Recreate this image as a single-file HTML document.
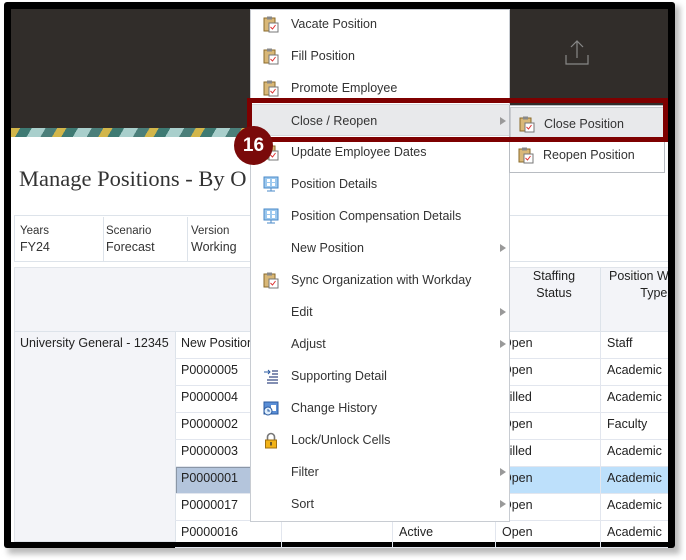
<!DOCTYPE html><html><head><style>
*{margin:0;padding:0;box-sizing:border-box}
body{width:686px;height:560px;background:#fff;position:relative;overflow:hidden;font-family:"Liberation Sans",sans-serif}
.a{position:absolute}
.t{font-size:12.5px;color:#333}
.mi{position:absolute;left:0;width:259px;height:32px;font-size:12.5px;color:#333;line-height:32px;padding-left:40px}
.ic{position:absolute;left:12px;top:8px;width:16px;height:17px}
.arr{position:absolute;right:4px;top:12px;width:0;height:0;border-left:6px solid #999;border-top:4px solid transparent;border-bottom:4px solid transparent}
.cell{position:absolute;font-size:12.5px;color:#222;height:27px;line-height:22px;padding-left:6px;border-bottom:1px solid #e2e6ee}
</style></head><body>
<div class="a" style="left:8px;top:6px;width:672px;height:548px;background:#bbb;filter:blur(3px)"></div>
<div class="a" style="left:4px;top:2px;width:671px;height:546px;background:#000;border-radius:3px"></div>
<div class="a" style="left:11px;top:9px;width:657px;height:533px;background:#fff;overflow:hidden">
 <div class="a" style="left:0;top:0;width:657px;height:119px;background:#312d2a"></div>
 <div class="a" style="left:0;top:119px;width:657px;height:9px;background:repeating-linear-gradient(120deg,#d2b64a 0 8px,#3e7a73 8px 18px,#a9cfcc 18px 30px,#4b7f7a 30px 40px)"></div>
 <div class="a" style="left:554px;top:30px;width:24px;height:28px">
  <svg width="24" height="28"><path d="M12 2V19M6 8L12 2L18 8M1 16V25H23V16" stroke="#888" stroke-width="1.2" fill="none"/></svg></div>
 <div class="a" style="left:8px;top:157px;font-family:'Liberation Serif',serif;font-size:22.5px;color:#333">Manage Positions - By O</div>
 <div class="a" style="left:3px;top:206px;width:660px;height:47px;border:1px solid #dde3ea"></div>
 <div class="a t" style="left:9px;top:216px;font-size:11.5px">Years<br><span style="font-size:12.5px;line-height:20px">FY24</span></div>
 <div class="a" style="left:92px;top:208px;width:1px;height:44px;background:#dde3ea"></div>
 <div class="a t" style="left:95px;top:216px;font-size:11.5px">Scenario<br><span style="font-size:12.5px;line-height:20px">Forecast</span></div>
 <div class="a" style="left:176px;top:208px;width:1px;height:44px;background:#dde3ea"></div>
 <div class="a t" style="left:180px;top:216px;font-size:11.5px">Version<br><span style="font-size:12.5px;line-height:20px">Working</span></div>
 <div class="a" style="left:3px;top:258px;width:660px;height:275px;background:#f3f4f8;border:1px solid #e0e4ea"></div>
 <div class="a" style="left:3px;top:322px;width:660px;height:1px;background:#dde3ea"></div>
 <div class="a" style="left:589px;top:258px;width:1px;height:64px;background:#dde3ea"></div>
 <div class="a" style="left:498px;top:259px;width:90px;text-align:center;font-size:12.5px;color:#222;line-height:17px">Staffing<br>Status</div>
 <div class="a" style="left:598px;top:259px;width:70px;font-size:12.5px;color:#222;line-height:17px;white-space:nowrap">Position W<br>&nbsp;&nbsp;&nbsp;&nbsp;&nbsp;&nbsp;&nbsp;&nbsp;&nbsp;Type</div>
 <div class="a" style="left:9px;top:327px;font-size:12.5px;color:#222">University General - 12345</div>
 <div class="a" style="left:164px;top:323px;width:1px;height:210px;background:#dde3ea"></div>
 <div class="a" style="left:165px;top:323px;width:492px;height:210px;background:#fff"></div>
 <div class="a" style="left:165px;top:458px;width:106px;height:27px;background:#b4c5dc;border:1px solid #8a96a6"></div>
 <div class="a" style="left:485px;top:457px;width:172px;height:28px;background:#bde0fb;border-top:1.5px solid #111;border-bottom:1.5px solid #111"></div>
</div>
<script>
var r=[["New Position","","Open","Staff"],["P0000005","","Open","Academic"],["P0000004","","Filled","Academic"],["P0000002","","Open","Faculty"],["P0000003","","Filled","Academic"],["P0000001","","Open","Academic"],["P0000017","","Open","Academic"],["P0000016","Active","Open","Academic"]];
var h="";r.forEach(function(x,i){var y=332+i*27;
h+='<div class="cell" style="left:175px;top:'+y+'px;width:106px;position:absolute;z-index:2">'+x[0]+'</div>';
h+='<div class="cell" style="left:281px;top:'+y+'px;width:111px;border-left:1px solid #e2e6ee"></div>';
h+='<div class="cell" style="left:392px;top:'+y+'px;width:103px;border-left:1px solid #e2e6ee;z-index:2">'+x[1]+'</div>';
h+='<div class="cell" style="left:495px;top:'+y+'px;width:105px;border-left:1px solid #e2e6ee;z-index:2">'+x[2]+'</div>';
h+='<div class="cell" style="left:600px;top:'+y+'px;width:68px;border-left:1px solid #e2e6ee;z-index:2">'+x[3]+'</div>';});
document.write('<div style="position:absolute;left:0;top:0;z-index:3">'+h+'</div>');
</script>
<div class="a" style="left:250px;top:9px;width:260px;height:513px;background:#fff;border:1px solid #c8ccd2;z-index:5">
<div id="m"></div></div>
<script>
var clip='<svg class="ic" viewBox="0 0 16 17"><rect x="1" y="2" width="11" height="13" fill="#d9b878" stroke="#8a6a2a"/><rect x="4" y="0.5" width="5" height="3" fill="#888"/><rect x="6" y="7" width="9" height="9" fill="#fff" stroke="#777"/><path d="M7.5 11l2 2 3-4" stroke="#d33" fill="none"/></svg>';
var scr='<svg class="ic" viewBox="0 0 16 17"><rect x="1" y="1" width="14" height="11" fill="#9cc8ee" stroke="#4a8ac8"/><rect x="4" y="3" width="3" height="3" fill="#fff"/><rect x="9" y="3" width="3" height="3" fill="#fff"/><rect x="4" y="7" width="3" height="3" fill="#fff"/><rect x="9" y="7" width="3" height="3" fill="#fff"/><path d="M8 12v3M4 15h8" stroke="#4a8ac8"/></svg>';
var sup='<svg class="ic" viewBox="0 0 16 17"><path d="M1 4h6M5 2l2 2-2 2" stroke="#2a5aa0" fill="none"/><path d="M9 3h6M9 6h6M6 9h9M4 12h11M4 15h11" stroke="#5a6a9a" stroke-width="1.5"/></svg>';
var hist='<svg class="ic" viewBox="0 0 16 17"><rect x="1" y="2" width="14" height="12" fill="#5a8ed6" stroke="#2a5aa0"/><rect x="8" y="5" width="5" height="6" fill="#fff"/><circle cx="5" cy="11" r="4" fill="#dfeefc" stroke="#2a5aa0"/><path d="M5 9v2h2" stroke="#2a5aa0" fill="none"/></svg>';
var lock='<svg class="ic" viewBox="0 0 16 17"><path d="M4.5 8V5a3.5 3.5 0 0 1 7 0v3" stroke="#777" stroke-width="1.6" fill="none"/><rect x="2.5" y="8" width="11" height="8" fill="#f2b318" stroke="#a07010"/><rect x="7.3" y="10" width="1.4" height="3.5" fill="#333"/></svg>';
var it=[[clip,"Vacate Position"],[clip,"Fill Position"],[clip,"Promote Employee"],["","Close / Reopen",1,1],[clip,"Update Employee Dates"],[scr,"Position Details"],[scr,"Position Compensation Details"],["","New Position",1],[clip,"Sync Organization with Workday"],["","Edit",1],["","Adjust",1],[sup,"Supporting Detail"],[hist,"Change History"],[lock,"Lock/Unlock Cells"],["","Filter",1],["","Sort",1]];
var h="";it.forEach(function(x,i){h+='<div class="mi" style="top:'+(i*32-2)+'px;'+(x[3]?'background:#e8e9eb;border-top:1px solid #d6d8db;border-bottom:1px solid #d6d8db':'')+'">'+x[0]+x[1]+(x[2]?'<span class="arr"></span>':'')+'</div>';});
document.getElementById("m").innerHTML=h;
</script>
<div class="a" style="left:509px;top:105px;width:156px;height:68px;background:#fff;border:1px solid #b8bcc2;z-index:5">
 <div class="mi" style="top:1px;width:154px;padding-left:33px;background:#e8e9eb;border:1px solid #c8cace"><svg class="ic" style="left:8px" viewBox="0 0 16 17"><rect x="1" y="2" width="11" height="13" fill="#d9b878" stroke="#8a6a2a"/><rect x="4" y="0.5" width="5" height="3" fill="#888"/><rect x="6" y="7" width="9" height="9" fill="#fff" stroke="#777"/><path d="M7.5 11l2 2 3-4" stroke="#d33" fill="none"/></svg>Close Position</div>
 <div class="mi" style="top:33px;width:154px;padding-left:33px"><svg class="ic" style="left:8px" viewBox="0 0 16 17"><rect x="1" y="2" width="11" height="13" fill="#d9b878" stroke="#8a6a2a"/><rect x="4" y="0.5" width="5" height="3" fill="#888"/><rect x="6" y="7" width="9" height="9" fill="#fff" stroke="#777"/><path d="M7.5 11l2 2 3-4" stroke="#d33" fill="none"/></svg>Reopen Position</div>
</div>
<div class="a" style="left:247px;top:98px;width:421px;height:44px;border:5px solid #7e0000;z-index:6"></div>
<div class="a" style="left:234px;top:126px;width:39px;height:39px;border-radius:50%;background:#7a0a0a;color:#fff;font-weight:bold;font-size:19px;text-align:center;line-height:39px;z-index:7">16</div>
</body></html>
